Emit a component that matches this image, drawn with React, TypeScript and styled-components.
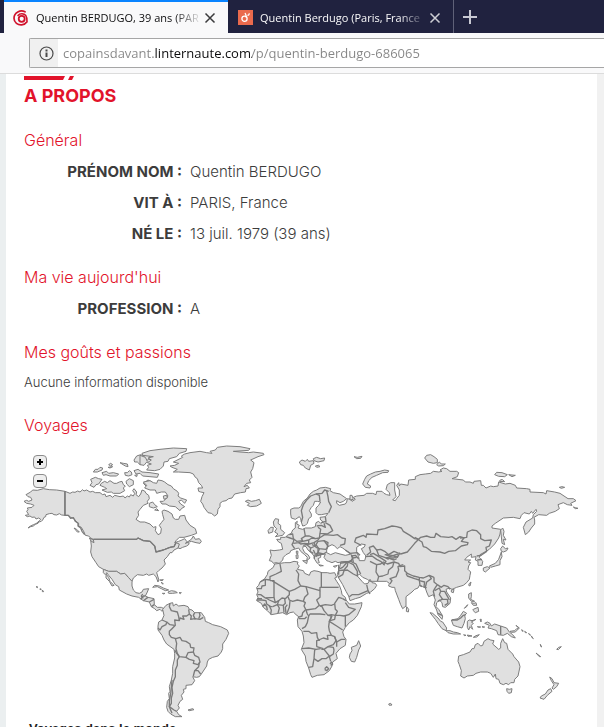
import React, { useState } from "react";
import styled, { createGlobalStyle, css } from "styled-components";

const GlobalStyle = createGlobalStyle`
  * { box-sizing: border-box; }
  html, body { margin: 0; height: 100%; overflow: hidden; }
  body { font-family: Inter, "Open Sans", sans-serif; color: #3c3c3c; background: #fff; }
  #root { height: 100%; }
  button { padding: 0; border: 0; background: none; color: inherit; font: inherit; cursor: pointer; }
`;

const Window = styled.div`
  display: flex;
  flex-direction: column;
  height: 100%;
  overflow: hidden;
`;

/* ---------- browser chrome ---------- */

const TabBar = styled.div`
  display: flex;
  flex: none;
  height: 33px;
  padding-left: 4px;
  background: #20223f;
  font-family: "Open Sans", "Noto Sans", sans-serif;
`;

const Tab = styled.div<{ $active?: boolean }>`
  display: flex;
  align-items: center;
  flex: 0 1 226px;
  min-width: 0;
  padding: 2px 10px 0 10px;
  color: #f9f9fa;
  border-right: 1px solid #5f6178;
  ${(p) =>
    p.$active &&
    css`
      flex-basis: 224px;
      padding: 0 10px 0 9px;
      border-top: 2px solid #0a84ff;
      border-right: 0;
      background: #f9f9fa;
      color: #0c0c0d;
    `}
`;

const TabTitle = styled.button`
  flex: 1;
  min-width: 0;
  margin-left: 7px;
  overflow: hidden;
  white-space: nowrap;
  text-align: left;
  font-size: 11px;
  font-weight: 500;
  line-height: 20px;
  mask-image: linear-gradient(90deg, #000 calc(100% - 28px), transparent);
`;

const IconButton = styled.button<{ $wide?: boolean }>`
  display: flex;
  align-items: center;
  justify-content: center;
  flex: none;
  width: ${(p) => (p.$wide ? "32px" : "16px")};
  color: ${(p) => (p.$wide ? "#c8c9d3" : "inherit")};
`;

const Toolbar = styled.div`
  flex: none;
  height: 41px;
  padding: 5px 0 5px 29px;
  border-bottom: 1px solid #dcdcdc;
  background: #f9f9fa;
`;

const AddressBox = styled.form`
  display: flex;
  height: 30px;
  border: 1px solid #a6a6a6;
  border-right: 0;
  border-radius: 2px 0 0 2px;
  background: #fff;
`;

const InfoButton = styled.button`
  display: flex;
  align-items: center;
  justify-content: center;
  flex: none;
  width: 28px;
  padding-left: 4px;
  && {
    background: #f0f0f0;
    color: #4a4a4a;
  }
`;

const Address = styled.input`
  flex: 1;
  min-width: 0;
  padding: 0 5px;
  border: 0;
  outline: 0;
  font: 13px/28px "Open Sans", "Noto Sans", sans-serif;
  color: transparent;
  background: linear-gradient(90deg, #868686 96px, #0c0c0d 96px, #0c0c0d 194px, #868686 194px);
  background-clip: text;
  -webkit-background-clip: text;
`;

/* ---------- page ---------- */

const Viewport = styled.div`
  flex: 1;
  min-height: 0;
  overflow: hidden;
  padding: 0 7px 0 6px;
  background: linear-gradient(90deg, #ebeff0 50%, #f1f1f1 50%);
`;

const Page = styled.main`
  min-height: 100%;
  padding: 0 18px;
  background: #fff;
`;

const LogoEdge = styled.svg`
  display: block;
  width: 52px;
  height: 6px;
`;

const Title = styled.h1`
  margin: 0;
  padding: 4px 0;
  font-size: 18px;
  font-weight: 700;
  line-height: 24px;
  color: #e2132b;
`;

const Section = styled.section`
  margin-top: 16px;
`;

const Heading = styled.h2`
  margin: 0;
  font-size: 16px;
  font-weight: 300;
  line-height: 24px;
  color: #e2132b;
`;

const Facts = styled.dl`
  display: grid;
  grid-template-columns: 158px 1fr;
  column-gap: 8px;
  margin: 4px 0 0;
  font-size: 15px;
  line-height: 31px;
`;

const Label = styled.dt`
  text-align: right;
  font-weight: 700;
`;

const Value = styled.dd`
  margin: 0;
  font-weight: 300;
`;

const Note = styled.p`
  margin: 0;
  padding: 8px 0 5px;
  font-size: 13px;
  font-weight: 300;
  line-height: 20px;
`;

const MapFrame = styled.div`
  position: relative;
  margin-top: 7px;
`;

const MapSvg = styled.svg`
  display: block;
  width: 100%;
  fill: #e0e0e0;
  stroke: #7d7d7d;
  stroke-width: 3;
  stroke-linejoin: round;
`;

const Border = styled.path`
  fill: none;
  stroke: #7a7a7a;
  stroke-width: 4;
`;

const ZoomControls = styled.div`
  position: absolute;
  top: 11px;
  left: 9px;
  display: grid;
  gap: 5px;
`;

const ZoomButton = styled.button`
  display: flex;
  align-items: center;
  justify-content: center;
  && {
    width: 14px;
    height: 14px;
    border: 1px solid #8c8c8c;
    border-radius: 4px;
    background: #eee;
  }
`;

const Caption = styled.h3`
  margin: 0;
  padding-left: 5px;
  font: bold 13px/16px "Liberation Sans", Arial, sans-serif;
  color: #222;
`;

const SwirlIcon = () => (
  <svg width="16" height="16" viewBox="0 0 16 16" fill="none" stroke="#d0112b" strokeLinecap="round">
    <path d="M12 1.800C7.500-.5 1 2.400 1 8.200c0 4.400 4 7 7.600 6.700 2-.1 3.900-1 4.900-2.600" strokeWidth="1.700" />
    <path d="M5 5.500C7 3 11 3.300 12.800 5.600c1.400 2 1.400 4 1.200 6" strokeWidth="1.600" />
    <circle cx="8.700" cy="8.800" r="3" strokeWidth="1.800" />
  </svg>
);

const ViadeoIcon = () => (
  <svg width="15" height="15" viewBox="0 0 15 15">
    <rect width="15" height="15" fill="#ea6a4d" />
    <circle cx="6.500" cy="8.800" r="2.600" fill="none" stroke="#fff" strokeWidth="1.300" />
    <path d="M7 3c1 1.500 1.400 3 1.200 4.500M9.500 5.500c1-.2 1.700-1 1.900-2.200" fill="none" stroke="#fff" strokeWidth="1.300" />
  </svg>
);

const CloseIcon = () => (
  <svg width="12" height="12" viewBox="0 0 12 12" stroke="currentColor" strokeWidth="1.500" opacity="0.8">
    <path d="M1.500 1.500l9 9M10.500 1.500l-9 9" />
  </svg>
);

const PlusIcon = () => (
  <svg width="14" height="14" viewBox="0 0 14 14" stroke="currentColor" strokeWidth="2">
    <path d="M7 0v14M0 7h14" />
  </svg>
);

const InfoIcon = () => (
  <svg width="15" height="15" viewBox="0 0 15 15" fill="none" stroke="currentColor">
    <circle cx="7.500" cy="7.500" r="6.500" strokeWidth="1.200" />
    <path d="M7.500 6.500v4.500M7.500 3.500v2" strokeWidth="2" />
  </svg>
);

/* ---------- world map ---------- */

type Region = { origin: [number, number]; lands: string[]; borders?: string[]; waters?: string[] };

const regions: Region[] = [
  {
    origin: [0, 0],
    lands: [
      // Alaska
      "62,156 68,150 82,151 100,146 118,149 140,150 165,154 165,226 155,225 148,221 140,225 132,224 126,220 118,221 108,224 107,230 102,232 98,240 94,244 86,246 84,250 76,253 70,258 62,260 54,264 60,259 70,254 78,251 84,246 88,242 92,238 86,234 78,237 74,231 66,232 60,228 52,230 46,226 56,224 50,214 54,209 52,204 66,202 72,196 62,192 50,190 42,184 50,181 56,184 66,180 62,172 54,170 48,164",
      // Canada
      "165,154 180,160 188,156 195,157 203,153 210,156 218,149 222,153 230,150 240,156 248,154 256,158 270,158 278,164 285,162 288,170 300,166 308,172 314,166 330,170 340,168 345,174 352,168 358,171 362,164 370,168 374,160 368,152 372,146 380,156 378,164 386,170 392,162 396,150 404,153 408,160 416,166 418,176 412,184 414,190 400,196 390,208 384,216 386,226 378,238 390,246 404,246 420,252 430,262 438,260 436,272 444,284 452,280 454,266 448,256 454,248 462,238 458,224 456,214 462,210 474,214 486,222 490,234 496,238 506,238 510,228 524,226 528,240 540,256 556,266 560,280 544,286 522,292 508,292 498,302 494,308 506,304 516,300 524,296 530,304 538,312 530,318 518,322 510,326 500,322 492,320 480,322 460,330 438,336 434,318 420,304 400,302 384,294 380,298 250,298 242,294 236,288 226,286 222,276 214,262 206,258 206,250 198,244 192,236 182,232 175,226 165,226",
      // United States
      "250,298 380,298 384,294 400,302 420,304 434,318 438,336 460,330 480,322 492,320 498,308 508,312 504,324 492,330 486,338 480,338 472,350 462,360 466,372 456,384 446,392 440,398 446,418 444,426 438,410 430,402 416,406 410,402 400,406 382,404 370,414 366,424 355,412 344,400 332,402 320,394 296,394 280,388 266,380 258,368 246,350 242,336 244,318 242,300 248,306",
      // Mexico and Central America
      "280,388 296,394 320,394 332,402 344,400 355,412 366,424 366,438 370,450 378,458 388,460 396,456 400,448 416,446 412,456 406,468 414,472 432,476 433,494 442,502 454,502 462,506 456,514 450,508 440,512 434,506 424,500 418,486 400,482 386,472 366,468 350,462 328,450 326,440 316,434 306,418 296,406 290,398 288,402 296,412 300,424 312,436 306,438 298,424 288,414 288,406 280,398",
      "526,310 544,298 550,288 556,298 568,296 574,304 570,310 558,308 544,304",
      "242,118 256,112 266,116 276,118 270,126 266,132 258,134 252,142 240,136 246,128",
      "274,130 284,124 292,128 300,122 312,130 320,130 328,126 336,124 340,134 346,138 340,144 344,152 330,160 310,160 304,156 292,157 276,150 290,146 284,142 270,136",
      "276,98 290,94 296,100 310,98 326,102 320,108 300,108 288,104 280,106",
      "250,96 256,88 264,88 270,82 278,84 276,90 262,96",
      "296,74 302,70 308,74 302,78", "294,82 308,80 300,84",
      "330,68 340,70 352,72 354,80 346,78 336,72",
      "344,98 352,98 358,92 364,96 366,104 356,108 346,106",
      "372,60 380,48 392,44 404,48 418,36 420,58 406,62 404,70 390,74 382,66 374,66",
      "372,92 384,88 396,96 420,98 446,102 442,112 420,110 398,108 390,100 378,102",
      "348,124 358,116 370,122 370,134 358,140 350,132",
      "400,130 414,120 426,126 420,140 408,138", "374,106 382,104 380,110",
      "192,264 200,268 208,276 202,276", "238,294 250,300 252,308 244,304",
      "78,440 84,441 82,443", "90,446 94,448 90,449", "97,450 101,455 97,455",
    ],
    borders: ["392,478 400,468 406,468", "400,482 408,476 414,472", "418,486 432,478", "424,500 433,494", "165,154 165,226 175,226 182,235 190,233 196,244 204,250 204,258 212,264 216,274 224,284", "400,475 394,468 398,462"],
  },
  {
    origin: [390, 0],
    lands: [
      // Greenland
      "90,78 104,76 116,70 100,66 128,52 124,48 134,42 150,38 180,34 200,38 216,40 210,34 226,30 232,22 260,18 300,20 330,26 326,31 280,34 300,36 326,38 340,36 370,40 372,44 354,50 332,60 342,68 338,86 332,96 336,112 328,120 332,128 320,130 312,140 322,136 328,144 318,146 316,156 302,158 284,162 276,174 266,176 258,182 248,184 240,190 240,200 234,208 232,222 224,228 214,220 204,218 192,202 188,192 182,184 186,170 192,158 182,156 176,154 174,144 188,144 184,136 176,128 172,116 166,112 160,102 150,98 116,96 100,96 112,88 96,82",
      "316,184 324,180 334,184 346,182 358,178 364,190 350,198 332,200 322,196 328,190",
      "6,40 30,32 60,28 100,24 140,26 138,34 118,40 110,50 88,56 84,64 72,66 70,78 60,88 44,92 20,90 26,82 22,76 34,72 22,68 34,60 24,54 40,50 8,46",
      "0,46 16,52 22,64 12,76 0,74",
      "10,126 30,122 40,128 50,130 54,120 66,122 74,126 84,134 94,138 100,146 112,154 116,160 114,168 122,174 140,180 134,190 124,180 116,184 122,192 134,200 124,206 120,212 106,200 88,198 78,192 66,192 60,184 70,184 78,176 84,168 76,156 64,156 50,160 46,150 30,150 14,144 20,136",
      "28,190 38,186 44,194 52,200 40,204 28,200", "44,210 50,206 56,212", "70,168 80,166 82,174 72,178",
    ],
  },
  {
    origin: [270, 390],
    lands: [
      // South America
      "188,118 198,106 210,100 218,98 220,108 228,102 236,108 252,106 264,110 268,118 276,120 284,128 304,128 314,142 316,154 326,158 338,164 362,170 382,180 386,190 378,208 368,222 368,236 364,246 354,258 338,262 326,268 322,276 320,288 304,312 298,320 290,322 278,320 284,332 276,344 258,346 258,356 250,358 252,366 244,376 248,388 240,394 234,406 238,414 230,424 236,434 246,440 226,440 212,432 204,424 200,412 202,394 208,386 206,370 210,364 208,350 214,330 218,310 218,290 224,264 224,250 222,238 200,222 192,210 186,196 174,180 174,168 176,156 186,150 192,136",
      "158,52 164,46 178,48 190,54 206,60 196,62 184,56 172,50", "204,66 214,62 226,64 232,68 218,70 206,70", "237,68 244,68 241,71", "187,70 195,70 191,72", "179,30 190,29 186,32", "184,36 190,42 187,42", "264,420 278,416 282,419 268,422",
    ],
    borders: [
      "210,100 208,110 214,122 232,126 236,140 238,152 224,150 226,166 216,176 208,184 208,194 214,202 228,206",
      "186,150 200,156 198,164 186,170 180,180 174,174", "200,156 210,164 224,166", "238,152 240,144 252,148 248,138 260,138 268,132 266,118",
      "268,132 274,138 272,148 284,146 300,148 310,142", "284,128 280,136 286,148", "298,128 300,136 296,146",
      "228,206 240,202 246,212 258,214 270,222 272,232 282,234 280,246 264,248 258,262 238,260 232,250 228,236 230,220 226,206",
      "280,246 284,256 296,262 300,276 294,284 280,280 282,272 268,268 258,262", "224,240 230,250 238,260 232,270 232,286 226,300 226,320 220,334 216,352 218,370 214,384 214,400 208,410 222,420 230,424",
      "298,278 296,290 284,302 280,318", "284,302 294,302 302,312", "216,330 214,352 212,372 208,392 208,410 216,430",
    ],
  },
  {
    origin: [0, 0],
    lands: [
      // Eurasia
      "842,208 842,222 844,234 856,238 868,230 872,236 874,246 878,258 886,256 892,250 896,236 904,230 904,222 898,212 904,202 910,196 914,184 922,184 932,186 926,196 918,204 918,218 924,224 934,224 954,220 946,230 930,232 932,240 940,246 932,250 926,244 918,248 916,260 904,264 886,264 878,268 870,266 864,264 868,256 860,252 862,244 856,248 856,264 848,270 844,280 832,286 826,292 812,292 812,298 800,298 806,306 814,310 818,328 808,330 792,332 780,330 784,346 778,362 786,364 790,370 798,368 808,370 818,360 820,352 828,344 840,338 842,332 852,328 866,324 872,334 884,344 892,352 890,362 900,354 894,344 884,338 878,326 880,318 888,320 894,330 904,338 912,348 914,358 922,370 928,368 924,356 932,352 932,344 946,342 942,352 950,362 956,364 966,368 976,364 984,368 992,366 990,378 984,396 982,404 986,414 998,434 1008,454 1016,468 1020,482 1036,476 1050,472 1070,460 1082,456 1094,446 1100,436 1096,430 1086,428 1080,418 1074,430 1064,432 1056,424 1042,408 1048,402 1058,412 1072,418 1080,424 1102,424 1130,424 1138,430 1136,438 1146,442 1154,442 1156,452 1166,478 1172,494 1178,506 1188,498 1188,470 1206,456 1214,448 1224,444 1228,436 1238,440 1246,444 1250,456 1256,470 1270,464 1276,480 1272,494 1280,510 1284,524 1296,538 1298,528 1286,508 1278,500 1280,488 1288,480 1296,488 1298,500 1306,502 1320,490 1322,474 1310,456 1308,448 1318,444 1326,448 1340,442 1360,436 1370,428 1378,418 1380,406 1382,396 1374,388 1376,378 1382,368 1374,366 1382,360 1364,360 1370,352 1384,342 1384,352 1398,350 1396,360 1404,364 1404,376 1416,376 1418,364 1408,352 1410,344 1428,334 1438,328 1454,312 1466,294 1470,282 1472,268 1446,264 1446,258 1456,250 1480,234 1510,232 1530,236 1534,226 1542,218 1558,222 1564,214 1568,220 1578,208 1580,214 1570,224 1568,234 1548,246 1540,262 1546,284 1556,276 1564,264 1574,252 1574,240 1572,232 1586,224 1610,226 1618,220 1636,214 1648,206 1644,194 1660,188 1672,194 1686,196 1682,190 1698,182 1690,176 1674,176 1650,160 1634,156 1610,152 1608,162 1600,158 1560,156 1560,148 1550,146 1520,144 1516,136 1500,130 1486,132 1466,126 1464,138 1450,140 1442,138 1428,144 1420,136 1414,136 1412,122 1392,124 1390,130 1380,126 1366,126 1360,120 1326,116 1342,110 1346,98 1340,94 1320,94 1310,86 1300,84 1290,90 1296,94 1286,96 1270,94 1262,100 1246,102 1230,104 1216,110 1216,118 1196,120 1194,136 1172,132 1168,138 1166,128 1160,136 1168,150 1168,166 1160,176 1156,182 1148,180 1158,170 1154,150 1154,128 1142,128 1132,134 1128,148 1138,158 1140,166 1130,164 1122,160 1116,154 1100,154 1098,164 1088,160 1070,160 1062,166 1040,168 1030,172 1036,178 1026,184 1020,176 1024,166 1022,178 1012,176 1010,186 1006,192 988,196 980,190 980,182 990,188 1000,184 1010,176 990,162 970,158 960,152 962,146 946,142 930,144 920,150 910,154 900,162 892,174 880,184 872,200 866,204 852,204",
      "1020,166 1026,166 1030,178 1020,180",
    ],
    waters: [
      "950,338 950,330 954,320 966,314 974,318 982,326 990,320 998,324 1006,330 1024,342 1006,346 990,342 976,338 962,344",
      "1040,322 1054,312 1066,314 1062,322 1054,326 1060,338 1068,348 1064,362 1048,362 1046,350 1040,336",
    ],
  },
  {
    origin: [720, 0],
    lands: [
      "70,246 76,236 86,238 84,250 92,256 92,268 104,278 98,286 76,290 84,282 74,276 80,266 72,258", "54,272 62,262 70,262 68,276 56,280",
      "148,66 156,60 166,64 172,58 176,64 190,62 192,70 182,76 178,90 166,84 160,76 152,74", "190,56 200,52 212,56 224,54 222,62 204,66 192,62", "196,78 206,76 210,80 200,82",
      "312,50 322,52 336,49 332,55 320,56",
      "338,132 344,118 350,108 362,102 376,96 390,94 404,90 416,92 414,97 398,98 380,106 366,112 356,122 352,132 362,138 360,144 346,142",
      "139,333 144,334 143,342 139,340", "138,345 144,344 144,355 139,356", "158,362 172,362 170,371", "206,374 220,377 210,378", "250,379 262,376 256,382",
    ],
    borders: [
      "154,246 158,232 154,212 160,194 170,180 182,168 198,162 208,166 210,184", "198,162 216,160 224,150 236,154", "230,152 234,170 236,184 244,200 236,218",
      "226,230 228,244 214,248", "200,258 214,256 226,262 222,250", "226,248 240,256 248,272 232,282 210,280 212,268 204,262", "210,280 208,294 196,296 178,288 166,288 162,266",
      "166,288 154,296 158,302 140,304 130,296 128,282 118,284", "108,290 120,294 132,298 130,306 126,314 134,326", "130,310 146,308 158,304 176,300 186,294 196,296", "146,308 152,312 164,310 178,312 192,308 204,300 208,294",
      "176,300 176,312 160,316", "168,312 182,324 180,334 190,340", "192,308 198,322 208,326 204,338 198,342", "182,324 196,318 186,314", "204,304 222,302 234,318 228,328 206,326 198,314z",
      "208,294 224,284 250,286 262,284 276,294 286,296 284,312 270,316", "222,302 234,308 232,320", "204,326 204,338 220,342 230,336", "190,330 196,342 192,356", "198,342 210,342", "196,348 206,346 218,342", "204,338 198,350",
      "286,330 300,340 322,338 330,346", "304,344 308,354 302,364 272,366", "304,348 316,346 326,356", "308,354 320,352", "302,364 318,372 326,390 332,402",
      "334,316 314,306 318,294 340,286 348,292 350,282 382,284 384,270 404,266 426,258 440,260 454,264 460,274 480,286 494,296 506,298 494,310 484,322 472,336 452,342 432,334 416,344 404,334 392,328 380,330 370,318 358,322 362,336 350,346",
      "346,350 366,348 380,358 392,364 404,376", "380,330 386,346 404,352 416,358", "404,344 426,346 442,352 450,338", "410,352 432,360 440,356",
    ],
  },
  {
    origin: [1110, 0],
    lands: [
      "134,54 140,46 152,44 162,50 172,58 172,68 160,70 144,66", "170,74 178,66 184,72 196,72 190,77 176,78", "344,104 350,97 366,98 382,104 374,110 356,109", "386,104 396,105 406,106 396,110",
      "358,124 362,119 368,119 374,125", "538,142 546,140 554,142 544,145", "580,201 586,203 594,205 586,206",
      "362,270 368,264 372,274 370,286 378,300 370,298 374,314 366,310", "362,326 368,318 376,326 384,324 380,332 370,336 364,334", "364,336 366,350 360,362 360,374 346,378 332,382 328,378 346,370 356,358", "310,384 322,380 330,384 316,396 310,392",
    ],
    borders: [
      "104,292 116,298 122,292 140,288 152,292 164,292 168,280 182,290 206,292 216,290 228,298 240,290 252,294 244,304 264,308 262,314 244,318 226,332 206,334 194,340 180,336 154,334 138,322 130,320 126,306 116,300",
      "240,294 260,292 262,276 276,270 290,272 302,284 302,296 314,302 334,300 328,318 318,322 320,334 300,348", "290,348 304,346", "292,360 306,358",
    ],
  },
  {
    origin: [690, 330],
    lands: [
      // Africa
      "104,42 120,40 134,38 150,38 162,34 174,36 172,42 178,48 172,58 190,62 194,70 208,76 212,66 222,62 234,64 246,68 262,68 270,70 284,68 290,82 284,84 290,94 298,106 304,122 306,134 316,142 318,150 328,162 344,162 366,158 364,170 352,196 340,210 328,218 316,232 308,246 312,260 318,268 316,286 300,296 288,310 292,326 278,336 276,348 268,362 252,374 232,376 216,382 212,374 206,354 198,334 196,318 184,298 192,278 190,258 186,244 174,230 172,210 176,200 168,194 160,186 150,188 140,194 128,188 116,190 94,194 82,182 70,172 64,160 50,152 54,142 50,134 54,126 50,112 56,106 60,96 74,86 82,74 84,64 92,58 100,52",
      "330,312 336,302 334,292 350,286 356,272 362,288 356,300 350,322 344,336 334,334 328,322",
    ],
    borders: [
      "60,96 76,88 90,90 90,80 108,72 124,64 120,42", "76,88 76,106 66,108 64,116 50,116", "90,92 102,92 102,142 76,144 62,134 52,134", "96,92 148,124 148,134 136,146 126,144 116,152 106,158 102,142",
      "148,124 164,118 182,108 174,92 176,72 168,60", "182,108 198,110 240,122 240,112 244,112 244,66", "244,112 296,112", "198,110 204,132 194,142 190,154 172,150 158,154 148,150 144,140",
      "240,122 240,142 230,150 238,166 226,176 198,180 192,168 196,158 190,154", "238,166 246,170 252,182 264,196 274,194 286,196 292,184 286,178 284,160 296,142 308,146", "240,168 256,164 274,166 284,162", "308,146 318,152", "286,196 300,196 312,198 326,194 346,178 326,172 316,158",
      "196,180 188,188 186,198 174,202", "206,198 210,192 240,192 256,194", "198,180 202,192 206,198 202,218 196,230 186,236", "176,206 194,206 200,200", "264,196 276,198 268,214 266,230 268,242 274,256 262,256 264,268 250,264 236,270 232,262 230,248 214,250 206,244 190,244",
      "274,198 272,206 268,214 290,228 308,240", "286,196 284,208 270,212", "316,198 316,230", "186,296 206,294 228,298 242,296", "230,290 230,272 240,270", "228,298 224,300 222,326 218,350 206,352", "222,326 234,334 246,326 258,326 268,318 252,298 264,290 280,292 282,300 280,312 268,320 272,334",
      "274,256 284,260 288,272 280,284 264,290", "284,260 290,276 290,290", "290,276 304,268 316,268", "244,298 252,298", "230,290 250,296", "254,356 260,350 266,356 260,362 254,358", "270,342 274,336 278,342 272,346",
      "92,194 94,180 88,168", "114,190 118,174 112,164 98,170", "132,188 130,166 112,164 116,152", "138,190 136,172 142,164", "140,192 148,172 150,152", "50,150 66,150 78,152 80,162 92,170 98,170", "68,170 74,162 80,170 82,180", "52,146 66,146", "134,146 136,160 130,166", "106,158 88,150 78,144",
      "300,56 308,52 322,36", "296,62 312,60 322,48 324,36 340,44 352,64 352,78 340,72 322,60 312,62 308,74 294,82", "328,140 336,134 356,134 384,122 380,104", "384,122 390,132", "336,18 340,36", "300,40 322,36 336,30", "296,44 296,74",
    ],
  },
  {
    origin: [1080, 330],
    lands: [
      "298,100 303,96 300,108 296,106", "244,120 252,118 250,128 244,126", "110,170 116,178 115,186 109,184",
      "180,188 188,190 204,204 212,214 218,216 230,234 228,242 216,236 204,220 196,208 188,198", "228,242 240,242 250,246 262,248 272,252 250,252 234,248",
      "281,254 288,256 283,257", "292,255 306,258 294,259", "310,262 318,257 328,254 320,261",
      "244,210 254,208 264,206 272,196 280,184 290,190 284,196 286,206 282,220 276,234 262,230 250,226", "292,214 298,210 306,212 318,208 304,216 310,220 304,226 308,238 300,230 296,240 292,232",
      "296,132 304,128 304,140 302,148 314,154 304,154 296,144", "304,158 312,160 318,158 320,166 310,166", "310,178 324,172 326,184 316,188 308,180", "283,175 293,164 290,170",
      "330,208 334,208 333,216", "322,230 332,231 326,232", "336,230 344,231 339,232",
      "344,220 352,216 360,220 364,228 374,222 392,228 410,234 418,246 428,254 436,264 424,260 412,250 400,256 384,254 380,242 364,236 354,234 358,226",
      "420,244 434,242 440,236 446,236 436,246 424,247", "438,226 448,234 444,233", "455,239 460,243 457,244", "464,244 470,248 466,248", "476,250 482,256 478,254", "484,258 490,266 487,264",
      "511,283 515,291 512,289", "498,309 512,320 508,320", "560,298 566,292 574,290 565,299",
      // Australia
      "266,318 280,314 300,306 306,296 312,296 316,284 324,280 332,288 338,286 342,274 354,266 362,270 372,272 368,282 386,298 392,294 392,280 398,266 404,278 410,280 414,298 428,312 432,320 446,336 450,350 444,378 434,388 432,398 422,398 416,404 408,400 400,404 390,400 386,388 378,386 376,372 370,382 362,370 352,366 332,366 318,370 310,376 292,378 282,384 272,378 274,362 268,344 264,334",
      "410,416 418,418 426,416 424,428 416,430 411,424", "539,381 546,386 552,398 566,400 560,410 550,418 546,414 552,404 544,392", "542,416 546,424 532,436 522,448 510,444 514,438 526,432 534,420", "56,462 62,460 66,465 58,466",
    ],
    borders: [
      "22,94 26,80 18,66 20,44 32,42 40,36 52,42 72,36 68,50 56,60 54,72 38,78 26,80", "60,102 66,92 60,86 78,80 86,60 84,50 92,46 100,44", "72,36 86,40 90,50 104,48 104,62 112,70 130,78 148,82 160,84 178,76 192,82",
      "108,70 112,78 134,86 148,90 148,82", "148,90 150,106 156,110", "148,92 164,96 162,110 170,114", "178,76 184,86 170,96 166,112", "192,82 192,96 202,104 194,116 190,124 194,140",
      "202,104 214,112 222,106 234,110 240,118", "194,122 208,114 212,124 224,124 234,142 238,150", "204,154 216,148 232,148 234,160 224,166", "212,124 208,134 218,148", "204,190 216,196", "246,210 262,210 272,204 280,196 288,194", "392,228 392,254",
      "0,14 10,10 30,22 48,34 40,44", "0,34 12,40 20,44", "48,14 60,20 84,12", "48,24 72,24 84,18",
    ],
  },
];

const toPath = (points: string, closed: boolean) => `M${points.replace("z", "")}${closed || points.endsWith("z") ? "Z" : ""}`;

const WorldMap = () => (
  <MapSvg viewBox="42 12 1665 831" role="img" aria-label="Carte du monde">
    {regions.map((region, i) => (
      <g key={i} transform={`translate(${region.origin[0]} ${region.origin[1]})`}>
        {region.lands.map((d) => (
          <path key={d} d={toPath(d, true)} />
        ))}
        {region.waters?.map((d) => (
          <path key={d} d={toPath(d, true)} fill="#fff" />
        ))}
        {region.borders?.map((d) => (
          <Border key={d} d={toPath(d, false)} />
        ))}
      </g>
    ))}
    <Border d="M250,298L380,298L384,294L400,302L420,304L434,318L438,336L460,330L480,322L492,320L498,308" />
  </MapSvg>
);

const general = [
  ["PRÉNOM NOM :", "Quentin BERDUGO"],
  ["VIT À :", "PARIS, France"],
  ["NÉ LE :", "13 juil. 1979 (39 ans)"],
];

const FactList = ({ items }: { items: string[][] }) => (
  <Facts>
    {items.map(([label, value]) => (
      <React.Fragment key={label}>
        <Label>{label}</Label>
        <Value>{value}</Value>
      </React.Fragment>
    ))}
  </Facts>
);

export default function App() {
  const [url, setUrl] = useState("copainsdavant.linternaute.com/p/quentin-berdugo-686065");

  return (
    <Window>
      <GlobalStyle />
      <TabBar>
        <Tab $active>
          <SwirlIcon />
          <TabTitle>Quentin BERDUGO, 39 ans (PAR</TabTitle>
          <IconButton aria-label="Fermer l'onglet"><CloseIcon /></IconButton>
        </Tab>
        <Tab>
          <ViadeoIcon />
          <TabTitle>Quentin Berdugo (Paris, France</TabTitle>
          <IconButton aria-label="Fermer l'onglet"><CloseIcon /></IconButton>
        </Tab>
        <IconButton $wide aria-label="Nouvel onglet"><PlusIcon /></IconButton>
      </TabBar>
      <Toolbar>
        <AddressBox onSubmit={(e) => e.preventDefault()}>
          <InfoButton type="button" aria-label="Informations du site"><InfoIcon /></InfoButton>
          <Address aria-label="Adresse" value={url} onChange={(e) => setUrl(e.target.value)} />
        </AddressBox>
      </Toolbar>
      <Viewport>
        <Page>
          <LogoEdge viewBox="0 0 52 6" fill="#e2132b" aria-hidden="true">
            <path d="M0 2H41L39 6H0zM46 2H50L48 6H44z" />
          </LogoEdge>
          <Title>A PROPOS</Title>
          <Section>
            <Heading>Général</Heading>
            <FactList items={general} />
          </Section>
          <Section>
            <Heading>Ma vie aujourd'hui</Heading>
            <FactList items={[["PROFESSION :", "A"]]} />
          </Section>
          <Section>
            <Heading>Mes goûts et passions</Heading>
            <Note>Aucune information disponible</Note>
          </Section>
          <Section>
            <Heading>Voyages</Heading>
            <MapFrame>
              <WorldMap />
              <ZoomControls>
                <ZoomButton aria-label="Zoom avant">
                  <svg width="6" height="6" viewBox="0 0 6 6" stroke="#000" strokeWidth="2"><path d="M3 0v6M0 3h6" /></svg>
                </ZoomButton>
                <ZoomButton aria-label="Zoom arrière">
                  <svg width="6" height="6" viewBox="0 0 6 6" stroke="#000" strokeWidth="2"><path d="M0 3h6" /></svg>
                </ZoomButton>
              </ZoomControls>
            </MapFrame>
            <Caption>Voyages dans le monde</Caption>
          </Section>
        </Page>
      </Viewport>
    </Window>
  );
}
